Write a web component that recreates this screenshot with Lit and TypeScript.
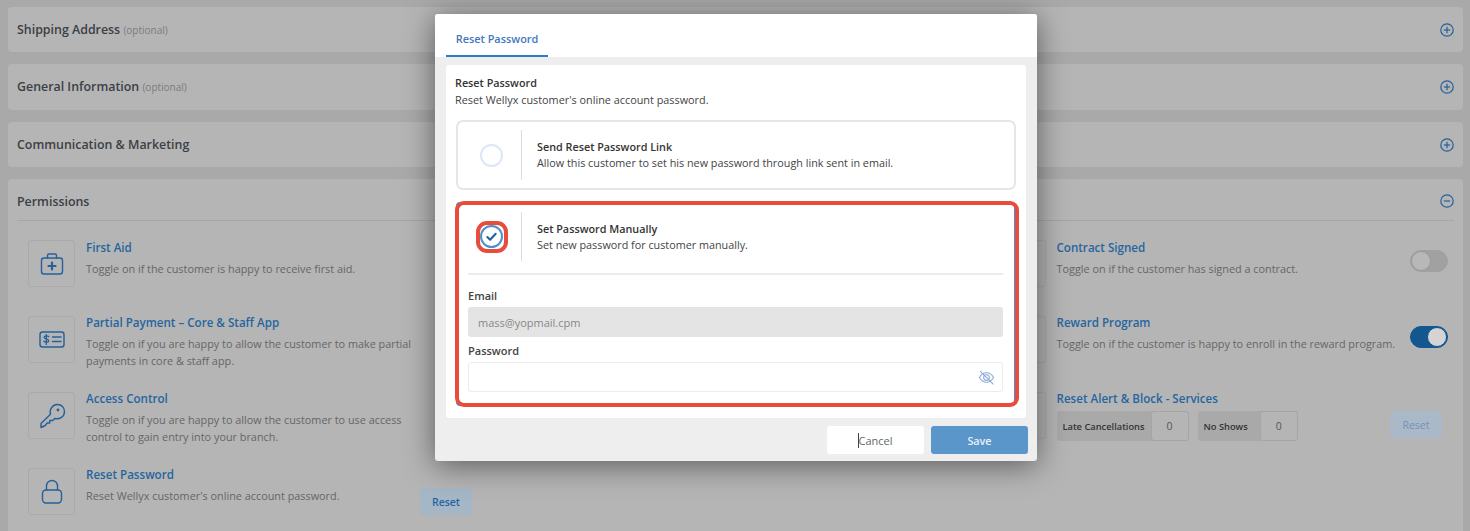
import { LitElement, html, css, svg } from 'lit';
import { customElement } from 'lit/decorators.js';

const icons: Record<string, unknown> = {
  aid: svg`<rect x="3.500" y="8" width="21" height="16" rx="2.500"/><path d="M9.500 8V5.500a1.500 1.500 0 0 1 1.500-1.500h6a1.500 1.500 0 0 1 1.500 1.500V8"/><path d="M14 12.500v7M10.500 16h7" stroke-width="2.200"/>`,
  bill: svg`<rect x="2" y="6" width="24" height="15" rx="2.500"/><path d="M14.500 11h8.500M14.500 15.500h8.500"/><path d="M10.800 10.700c-.6-1.100-4.300-1.500-4.700.4-.4 2.100 4.900 1.500 4.700 3.800-.2 1.800-4.200 1.600-5 .3M8.300 8.600v10" stroke-width="1.300"/>`,
  key: svg`<path d="M3 25.500v-4l9.500-9.200C11 7.500 14.500 2.500 19.500 2.500c4 0 7 3 7 7 0 5-4.800 8.300-9.800 7l-2 2h-3v2.500h-2.500l-2 2.500z"/><circle cx="20" cy="8" r=".7"/>`,
  lock: svg`<rect x="4.500" y="12" width="19" height="13" rx="3.500"/><path d="M8.500 12V8a5.500 5.500 0 0 1 11 0v4"/>`,
};

interface Perm {
  title: string;
  desc: string;
  icon?: string;
  toggle?: boolean;
  reset?: boolean;
  counters?: boolean;
}

const rows: (Perm | null)[][] = [
  [
    { title: 'First Aid', desc: 'Toggle on if the customer is happy to receive first aid.', icon: 'aid' },
    null,
    { title: 'Contract Signed', desc: 'Toggle on if the customer has signed a contract.', toggle: false },
  ],
  [
    { title: 'Partial Payment – Core & Staff App', desc: 'Toggle on if you are happy to allow the customer to make partial payments in core & staff app.', icon: 'bill' },
    null,
    { title: 'Reward Program', desc: 'Toggle on if the customer is happy to enroll in the reward program.', toggle: true },
  ],
  [
    { title: 'Access Control', desc: 'Toggle on if you are happy to allow the customer to use access control to gain entry into your branch.', icon: 'key' },
    null,
    { title: 'Reset Alert & Block - Services', desc: '', counters: true, reset: true },
  ],
  [
    { title: 'Reset Password', desc: "Reset Wellyx customer's online account password.", icon: 'lock', reset: true },
    null,
    null,
  ],
];

@customElement('app-root')
export class AppRoot extends LitElement {
  static styles = css`
    :host {
      display: block;
      position: relative;
      height: 531px;
      overflow: hidden;
      background: #a9a9a9;
      font-family: 'Open Sans', 'Liberation Sans', sans-serif;
      color: #333;
    }
    * { box-sizing: border-box; }
    .page {
      display: flex;
      flex-direction: column;
      gap: 12px;
      padding: 7px 7px 0 8px;
    }
    .card {
      background: #b5b5b5;
      border-radius: 4px;
      padding: 0 9px;
    }
    .card-head {
      display: flex;
      align-items: center;
      justify-content: space-between;
      height: 45px;
      font-size: 12.400px;
      font-weight: 600;
      color: #3a4046;
    }
    .card-head.tall { height: 46px; padding-bottom: 1px; }
    .card-head small {
      font-size: 10px;
      font-weight: 400;
      color: #7c7c7c;
    }
    .plus { width: 14px; height: 14px; fill: none; stroke: #25609a; stroke-width: 1.200; }
    .perm-head { height: 42px; padding-top: 3px; border-bottom: 1px solid #a6a6a6; }
    .grid {
      display: grid;
      grid-template-columns: 485px 485.500px 449.500px;
      grid-auto-rows: 47px;
      row-gap: 29px;
      padding: 19px 0 20px 11px;
    }
    .cell { display: flex; min-width: 0; }
    .cell:nth-child(n + 4) .text { margin-top: -1px; }
    .box {
      flex: 0 0 47px;
      height: 47px;
      border: 1px solid #aaa;
      border-radius: 3px;
      margin-right: 11px;
      display: flex;
      align-items: center;
      justify-content: center;
    }
    .box svg { width: 28px; height: 28px; fill: none; stroke: #25609a; stroke-width: 1.400; stroke-linecap: round; stroke-linejoin: round; }
    .text { flex: 0 0 334px; }
    .wide { flex: 1; }
    .name { font-size: 11.600px; font-weight: 600; line-height: 16px; color: #25659f; }
    .desc { font-size: 10.850px; line-height: 16.500px; margin-top: 5px; color: #666; }
    .toggle {
      flex: none;
      width: 38px;
      height: 22px;
      margin-top: 10px;
      border-radius: 11px;
      background: #a1a1a1;
      border: 1px solid #a1a1a1;
      display: flex;
    }
    .toggle i { width: 20px; height: 20px; border-radius: 50%; background: #b8b8b8; border: 1px solid #999; }
    .toggle.on { background: #14568f; border-color: #14568f; justify-content: flex-end; }
    .toggle.on i { background: #d4d4d4; border-color: #14568f; }
    .reset {
      flex: none;
      width: 52px;
      height: 27px;
      margin-top: 20px;
      border-radius: 3px;
      background: #a5b6c6;
      color: #25659f;
      font-size: 10.500px;
      font-weight: 600;
      display: flex;
      align-items: center;
      justify-content: center;
    }
    .reset.faded { margin: 19px 6px 0 0; color: #7493b1; background: #a9b9c8; font-weight: 400; }
    .counters { display: flex; gap: 9px; margin-top: 4px; }
    .counter {
      display: flex;
      height: 30px;
      background: #a9a9a9;
      border-radius: 3px;
      font-size: 9.300px;
      font-weight: 600;
      color: #333;
      align-items: center;
      padding-left: 6px;
    }
    .counter b {
      margin-left: 6px;
      width: 38px;
      height: 30px;
      border: 1px solid #a5a5a5;
      border-radius: 3px;
      background: #b5b5b5;
      font-size: 10.500px;
      font-weight: 400;
      color: #555;
      display: flex;
      align-items: center;
      justify-content: center;
    }
    .counter:last-child b { margin-left: 12px; }
    .modal {
      position: absolute;
      left: 435px;
      top: 14px;
      width: 602px;
      height: 447px;
      background: #eee;
      border-radius: 3px;
      box-shadow: 0 4px 30px rgba(0, 0, 0, 0.5);
      display: flex;
      flex-direction: column;
    }
    .tabs { height: 43px; background: #fff; padding-left: 11px; border-radius: 3px 3px 0 0; }
    .tab {
      width: 102px;
      height: 43px;
      border-bottom: 2px solid #2f7cc4;
      color: #3f78bd;
      font-size: 10.900px;
      font-weight: 600;
      display: flex;
      align-items: center;
      justify-content: center;
      padding-top: 8px;
    }
    .panel {
      margin: 8px 11px 0;
      height: 353px;
      background: #fff;
      border-radius: 3px;
      padding: 10px;
    }
    .panel h3 { margin: 0 0 0 -1px; font-size: 10.800px; font-weight: 600; line-height: 16px; color: #333; }
    .panel p { margin: 1px 0 0 -1px; font-size: 10.850px; line-height: 16px; color: #444; }
    .option {
      position: relative;
      margin-top: 12px;
      border: 2px solid #e6e6e6;
      border-radius: 7px;
      height: 70px;
    }
    .option.picked { border-color: #4d90cc; border-radius: 4px; height: 204px; }
    .opt-head { display: flex; align-items: center; margin-top: 8px; height: 50px; }
    .picked .opt-head { height: 49px; }
    .radio-col { flex: 0 0 64px; height: 100%; border-right: 1px solid #dcdcdc; display: flex; align-items: center; padding-left: 22px; }
    .radio {
      position: relative;
      width: 23px;
      height: 23px;
      border: 2px solid #dce8f5;
      border-radius: 50%;
      display: flex;
      align-items: center;
      justify-content: center;
    }
    .radio.on { border-color: #4d90cc; }
    .radio svg { width: 13px; height: 13px; fill: none; stroke: #25609a; stroke-width: 2.200; stroke-linecap: round; stroke-linejoin: round; }
    .opt-text { margin-left: 15px; }
    .opt-text strong { display: block; font-size: 10.800px; font-weight: 600; line-height: 16px; color: #333; }
    .opt-text span { display: block; font-size: 10.800px; line-height: 16px; color: #444; }
    .opt-body { margin: 12px 11px 0 10px; border-top: 2px solid #e8edf2; padding-top: 13px; }
    label { display: block; font-size: 11px; font-weight: 600; line-height: 16px; color: #444; margin-bottom: 3px; }
    .input {
      height: 30px;
      border-radius: 3px;
      display: flex;
      align-items: center;
      justify-content: space-between;
      padding: 0 7px 0 10px;
      font-size: 11px;
      margin-bottom: 6px;
    }
    .input.off { background: #e4e4e4; color: #888; }
    .input.pw { border: 1px solid #ececec; }
    .input svg { width: 17px; height: 17px; fill: none; stroke: #8aa9d8; stroke-width: 1.100; stroke-linecap: round; }
    .mark { position: absolute; border: 4px solid #e74c3c; pointer-events: none; }
    .mark.big { left: -3px; top: -3px; right: -5px; bottom: -3px; border-radius: 9px; }
    .mark.small { left: -6px; top: -6px; right: -7px; bottom: -7px; border-radius: 11px; }
    .foot { display: flex; justify-content: flex-end; gap: 7px; margin-top: 8px; padding-right: 9px; }
    .btn {
      position: relative;
      width: 97px;
      height: 28px;
      border-radius: 3px;
      font-size: 11px;
      display: flex;
      align-items: center;
      justify-content: center;
    }
    .btn.cancel { background: #fff; color: #666; }
    .btn.save { background: #5b96cb; color: #e8f0f8; font-size: 10.800px; font-weight: 600; }
    .caret { position: absolute; left: 31px; top: 7px; width: 1px; height: 15px; background: #444; }
  `;

  private plus(minus = false) {
    return html`<svg class="plus" viewBox="0 0 14 14"><circle cx="7" cy="7" r="6.200"/><path d="M3.800 7h6.400"/>${minus ? '' : svg`<path d="M7 3.800v6.400"/>`}</svg>`;
  }

  private perm(p: Perm | null, col: number) {
    if (!p) return html`<div class="cell"></div>`;
    return html`<div class="cell">
      <div class="box">${p.icon ? html`<svg viewBox="0 0 28 28">${icons[p.icon]}</svg>` : ''}</div>
      <div class="text ${col === 2 ? 'wide' : ''}">
        <div class="name">${p.title}</div>
        ${p.desc ? html`<div class="desc">${p.desc}</div>` : ''}
        ${p.counters
          ? html`<div class="counters">
              <div class="counter">Late Cancellations<b>0</b></div>
              <div class="counter">No Shows<b>0</b></div>
            </div>`
          : ''}
      </div>
      ${p.toggle !== undefined ? html`<div class="toggle ${p.toggle ? 'on' : ''}"><i></i></div>` : ''}
      ${p.reset ? html`<div class="reset ${col === 2 ? 'faded' : ''}">Reset</div>` : ''}
    </div>`;
  }

  render() {
    return html`
      <div class="page">
        <div class="card"><div class="card-head"><span>Shipping Address <small>(optional)</small></span>${this.plus()}</div></div>
        <div class="card"><div class="card-head tall"><span>General Information <small>(optional)</small></span>${this.plus()}</div></div>
        <div class="card"><div class="card-head"><span>Communication &amp; Marketing</span>${this.plus()}</div></div>
        <div class="card">
          <div class="card-head perm-head"><span>Permissions</span>${this.plus(true)}</div>
          <div class="grid">${rows.map((r) => r.map((p, i) => this.perm(p, i)))}</div>
        </div>
      </div>

      <div class="modal">
        <div class="tabs"><div class="tab">Reset Password</div></div>
        <div class="panel">
          <h3>Reset Password</h3>
          <p>Reset Wellyx customer's online account password.</p>
          <div class="option">
            <div class="opt-head">
              <div class="radio-col"><div class="radio"></div></div>
              <div class="opt-text">
                <strong>Send Reset Password Link</strong>
                <span>Allow this customer to set his new password through link sent in email.</span>
              </div>
            </div>
          </div>
          <div class="option picked">
            <div class="opt-head">
              <div class="radio-col">
                <div class="radio on">
                  <svg viewBox="0 0 14 14"><path d="M2.500 7.500l3 3 6-6.500"/></svg>
                  <div class="mark small"></div>
                </div>
              </div>
              <div class="opt-text">
                <strong>Set Password Manually</strong>
                <span>Set new password for customer manually.</span>
              </div>
            </div>
            <div class="opt-body">
              <label>Email</label>
              <div class="input off">mass@yopmail.cpm</div>
              <label>Password</label>
              <div class="input pw">
                <span></span>
                <svg viewBox="0 0 18 18">
                  <path d="M1.500 9C3.500 5.500 6 4 9 4s5.500 1.500 7.500 5c-2 3.500-4.500 5-7.500 5s-5.500-1.500-7.500-5z"/>
                  <circle cx="9" cy="9" r="3"/>
                  <path d="M2.500 2.500l13.500 13.500"/>
                </svg>
              </div>
            </div>
            <div class="mark big"></div>
          </div>
        </div>
        <div class="foot">
          <div class="btn cancel">Cancel<span class="caret"></span></div>
          <div class="btn save">Save</div>
        </div>
      </div>
    `;
  }
}
